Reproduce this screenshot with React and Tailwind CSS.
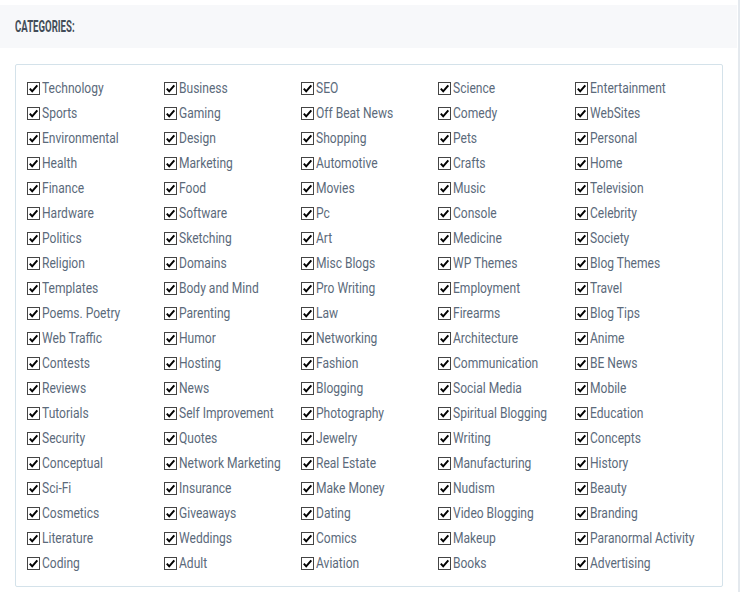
import React from 'react';

const categories = [
  ['Technology', 'Business', 'SEO', 'Science', 'Entertainment'],
  ['Sports', 'Gaming', 'Off Beat News', 'Comedy', 'WebSites'],
  ['Environmental', 'Design', 'Shopping', 'Pets', 'Personal'],
  ['Health', 'Marketing', 'Automotive', 'Crafts', 'Home'],
  ['Finance', 'Food', 'Movies', 'Music', 'Television'],
  ['Hardware', 'Software', 'Pc', 'Console', 'Celebrity'],
  ['Politics', 'Sketching', 'Art', 'Medicine', 'Society'],
  ['Religion', 'Domains', 'Misc Blogs', 'WP Themes', 'Blog Themes'],
  ['Templates', 'Body and Mind', 'Pro Writing', 'Employment', 'Travel'],
  ['Poems. Poetry', 'Parenting', 'Law', 'Firearms', 'Blog Tips'],
  ['Web Traffic', 'Humor', 'Networking', 'Architecture', 'Anime'],
  ['Contests', 'Hosting', 'Fashion', 'Communication', 'BE News'],
  ['Reviews', 'News', 'Blogging', 'Social Media', 'Mobile'],
  ['Tutorials', 'Self Improvement', 'Photography', 'Spiritual Blogging', 'Education'],
  ['Security', 'Quotes', 'Jewelry', 'Writing', 'Concepts'],
  ['Conceptual', 'Network Marketing', 'Real Estate', 'Manufacturing', 'History'],
  ['Sci-Fi', 'Insurance', 'Make Money', 'Nudism', 'Beauty'],
  ['Cosmetics', 'Giveaways', 'Dating', 'Video Blogging', 'Branding'],
  ['Literature', 'Weddings', 'Comics', 'Makeup', 'Paranormal Activity'],
  ['Coding', 'Adult', 'Aviation', 'Books', 'Advertising'],
];

function CheckItem({ label }) {
  return (
    <label className="flex items-center h-[25px] cursor-pointer">
      <span className="w-[13px] h-[13px] border border-[#444] bg-white flex items-center justify-center shrink-0">
        <svg width="11" height="11" viewBox="0 0 11 11">
          <path d="M1.8 5.6 L4.2 8.3 L9.3 2.3" fill="none" stroke="#000" strokeWidth="2" />
        </svg>
      </span>
      <span className="ml-[2px] inline-block origin-left scale-x-[0.86] text-[14px] text-[#5b6a7b] whitespace-nowrap">{label}</span>
    </label>
  );
}

export default function App() {
  return (
    <div className="w-[740px] h-[592px] bg-white relative" style={{ fontFamily: 'Roboto, sans-serif' }}>
      <div className="absolute right-0 top-0 h-full w-[2px] bg-[#e4e9ee]" />
      <div className="pt-[5px] w-[737px]">
        <div className="h-[43px] bg-[#f7f8fa] flex items-center px-[15px]">
          <span className="inline-block origin-left scale-x-[0.6] text-[16px] font-bold text-[#434d58]">CATEGORIES:</span>
        </div>
      </div>
      <div className="mt-[16px] ml-[15px] w-[708px] border border-[#d4e2ea] rounded-[2px] pt-[11px] pb-[10px] pl-[11px]">
        {categories.map((row, i) => (
          <div key={i} className="grid grid-cols-[137px_137px_137px_137px_137px]">
            {row.map(c => <CheckItem key={c} label={c} />)}
          </div>
        ))}
      </div>
    </div>
  );
}
